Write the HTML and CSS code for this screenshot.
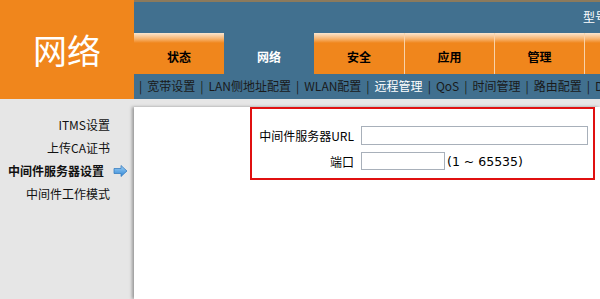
FILE: index.html
```html
<!DOCTYPE html>
<html lang="zh-CN">
<head>
    <meta charset="UTF-8">
    <title>网络 - 远程管理</title>
    <link rel="stylesheet" href="styles.css">
</head>
<body>

<header>
    <div class="brand">网络</div>
    <div class="top-right">
        <div class="topbar"><span class="model">型号</span></div>
        <ul class="tabs">
            <li>状态</li>
            <li class="active">网络</li>
            <li>安全</li>
            <li>应用</li>
            <li>管理</li>
            <li class="more"></li>
        </ul>
        <div class="subnav">
            <span class="sep">|</span><span>宽带设置</span>
            <span class="sep">|</span><span>LAN侧地址配置</span>
            <span class="sep">|</span><span>WLAN配置</span>
            <span class="sep">|</span><span class="current">远程管理</span>
            <span class="sep">|</span><span>QoS</span>
            <span class="sep">|</span><span>时间管理</span>
            <span class="sep">|</span><span>路由配置</span>
            <span class="sep">|</span><span>DNS</span>
        </div>
    </div>
</header>

<div class="page">
    <ul class="sidebar">
        <li>ITMS设置</li>
        <li>上传CA证书</li>
        <li class="selected">中间件服务器设置
            <svg class="arrow" width="15" height="12" viewBox="0 0 15 12">
                <defs>
                    <linearGradient id="ag" x1="0" y1="0" x2="0" y2="1">
                        <stop offset="0" stop-color="#9fd0f5"/>
                        <stop offset="1" stop-color="#2f86d6"/>
                    </linearGradient>
                </defs>
                <path d="M1 3.5 H8 V0.5 L14 6 L8 11.5 V8.5 H1 Z" fill="url(#ag)" stroke="#3a7fc0" stroke-width="0.8"/>
            </svg>
        </li>
        <li>中间件工作模式</li>
    </ul>
    <main class="content">
        <div class="form-box">
            <div class="row">
                <label>中间件服务器URL</label>
                <input type="text" class="url">
            </div>
            <div class="row">
                <label>端口</label>
                <input type="text" class="port">
                <span class="hint">(1 ~ 65535)</span>
            </div>
        </div>
    </main>
</div>

</body>
</html>
```

FILE: styles.css
```css
        body {
            font-family: "Noto Sans CJK SC", "DejaVu Sans", sans-serif;
            margin: 0;
            padding: 0;
            background: #e6e6e6;
            color: #000;
            font-size: 12px;
            width: 600px;
            height: 299px;
            overflow: hidden;
        }
        header {
            display: flex;
            height: 99px;
        }
        .brand {
            width: 134px;
            flex-shrink: 0;
            background: #f0861c;
            color: #fff;
            font-size: 34px;
            text-align: center;
            line-height: 99px;
        }
        .top-right {
            flex: 1;
            display: flex;
            flex-direction: column;
            background: #41708f;
            overflow: hidden;
        }
        .topbar {
            height: 31px;
            border-top: 2px solid #8c7a5c;
            white-space: nowrap;
            padding-left: 449px;
        }
        .model {
            display: inline-block;
            color: #fff;
            margin-top: 8px;
            line-height: 14px;
        }
        .tabs {
            list-style: none;
            display: flex;
            margin: 0;
            padding: 0;
            height: 41px;
        }
        .tabs li {
            width: 90px;
            flex-shrink: 0;
            background: linear-gradient(#fbe6cf 0px, #f7b26c 6px, #f0861c 10px, #f0861c);
            border-left: 1px solid #f8d2a8;
            box-sizing: border-box;
            text-align: center;
            font-weight: bold;
            line-height: 14px;
            padding-top: 17px;
        }
        .tabs li:first-child {
            border-left: none;
        }
        .tabs li.active {
            background: #41708f;
            color: #fff;
            border-left: none;
        }
        .tabs li.active + li {
            border-left: none;
        }
        .tabs li.more {
            flex: 1;
            width: auto;
        }
        .subnav {
            height: 25px;
            line-height: 24px;
            padding-left: 5px;
            color: #1a1a1a;
            white-space: nowrap;
            display: flex;
            font-size: 12px;
        }
        .subnav .sep {
            padding: 0 5px 0 0;
        }
        .subnav span:not(.sep) {
            padding-right: 5px;
            flex-shrink: 0;
        }
        .subnav .current {
            color: #fff;
        }
        .page {
            display: flex;
            padding-top: 8px;
            height: 192px;
        }
        .sidebar {
            list-style: none;
            width: 134px;
            flex-shrink: 0;
            margin: 0;
            padding: 10px 0 0 0;
            box-sizing: border-box;
        }
        .sidebar li {
            height: 23px;
            line-height: 16px;
            text-align: right;
            padding-right: 24px;
            position: relative;
            color: #111;
        }
        .sidebar li.selected {
            font-weight: bold;
            padding-right: 30px;
        }
        .sidebar .arrow {
            position: absolute;
            right: 6px;
            top: 2px;
        }
        .content {
            flex: 1;
            background: #fff;
            box-shadow: -2px 0 3px #999;
            padding-left: 116px;
            padding-right: 5px;
        }
        .form-box {
            border: 2px solid #e01010;
            padding-top: 13px;
            box-sizing: border-box;
            height: 73px;
        }
        .row {
            display: flex;
            align-items: center;
            height: 26px;
        }
        .row label {
            width: 102px;
            text-align: right;
            padding-right: 7px;
            flex-shrink: 0;
        }
        .row input {
            border: 1px solid #a8b0ba;
            height: 19px;
            box-sizing: border-box;
            margin: 0;
            padding: 0;
        }
        .row .url {
            width: 227px;
        }
        .row .port {
            width: 84px;
            height: 18px;
        }
        .hint {
            font-size: 12.5px;
            margin-left: 2px;
            font-family: "DejaVu Sans", sans-serif;
        }
```
